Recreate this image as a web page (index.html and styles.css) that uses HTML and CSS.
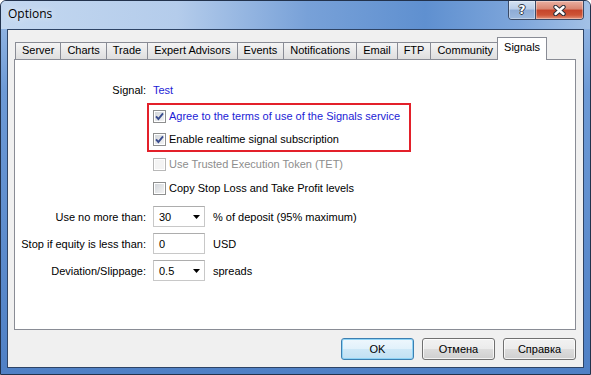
FILE: index.html
```html
<!DOCTYPE html>
<html lang="en">

<head>
    <meta charset="UTF-8">
    <title>Options</title>
    <link rel="stylesheet" href="styles.css">
</head>

<body>
    <div class="window">
        <div class="titlebar">
            <span class="title">Options</span>
            <div class="caption-buttons">
                <div class="cap-btn help">?</div>
                <div class="cap-btn close">
                    <svg width="13" height="11" viewBox="0 0 13 11">
                        <path d="M2.5 2 L10.5 9 M10.5 2 L2.5 9" stroke="#2a2f3a" stroke-width="4.4" stroke-linecap="round" fill="none" />
                        <path d="M2.5 2 L10.5 9 M10.5 2 L2.5 9" stroke="#fff" stroke-width="2.4" stroke-linecap="round" fill="none" />
                    </svg>
                </div>
            </div>
        </div>

        <div class="client">
            <div class="tabs">
                <div class="tab">Server</div>
                <div class="tab">Charts</div>
                <div class="tab">Trade</div>
                <div class="tab">Expert Advisors</div>
                <div class="tab">Events</div>
                <div class="tab">Notifications</div>
                <div class="tab">Email</div>
                <div class="tab">FTP</div>
                <div class="tab">Community</div>
                <div class="tab active">Signals</div>
            </div>

            <div class="panel">
                <div class="row signal-row">
                    <div class="label">Signal:</div>
                    <div class="link">Test</div>
                </div>

                <!-- the two options marked in red -->
                <div class="highlight">
                    <div class="check-row">
                        <span class="check"><svg width="11" height="11" viewBox="0 0 11 11"><path d="M2 5.3 L4.4 8 L9 2.4" stroke="#3a4d8f" stroke-width="1.9" fill="none" /></svg></span>
                        <span class="link">Agree to the terms of use of the Signals service</span>
                    </div>
                    <div class="check-row">
                        <span class="check"><svg width="11" height="11" viewBox="0 0 11 11"><path d="M2 5.3 L4.4 8 L9 2.4" stroke="#3a4d8f" stroke-width="1.9" fill="none" /></svg></span>
                        <span>Enable realtime signal subscription</span>
                    </div>
                </div>

                <div class="check-row indent disabled">
                    <span class="check"></span>
                    <span>Use Trusted Execution Token (TET)</span>
                </div>
                <div class="check-row indent">
                    <span class="check"></span>
                    <span>Copy Stop Loss and Take Profit levels</span>
                </div>

                <div class="row field">
                    <div class="label">Use no more than:</div>
                    <div class="combo">
                        <span>30</span>
                        <svg width="7" height="4" viewBox="0 0 7 4"><path d="M0 0 H7 L3.5 4 Z" fill="#000" /></svg>
                    </div>
                    <div class="suffix">% of deposit (95% maximum)</div>
                </div>
                <div class="row field">
                    <div class="label">Stop if equity is less than:</div>
                    <div class="combo">
                        <span>0</span>
                    </div>
                    <div class="suffix">USD</div>
                </div>
                <div class="row field">
                    <div class="label">Deviation/Slippage:</div>
                    <div class="combo">
                        <span>0.5</span>
                        <svg width="7" height="4" viewBox="0 0 7 4"><path d="M0 0 H7 L3.5 4 Z" fill="#000" /></svg>
                    </div>
                    <div class="suffix">spreads</div>
                </div>
            </div>

            <div class="buttons">
                <button class="btn default">OK</button>
                <button class="btn">Отмена</button>
                <button class="btn">Справка</button>
            </div>
        </div>
    </div>
</body>

</html>
```

FILE: styles.css
```css
* {
    box-sizing: border-box;
}

body {
    margin: 0;
    background: #fff;
    font-family: "Liberation Sans", Arial, sans-serif;
    font-size: 11px;
    color: #000;
}

/* window frame */
.window {
    width: 591px;
    height: 375px;
    border: 1px solid #22324c;
    border-radius: 6px 6px 0 0;
    padding: 0 6px 6px;
    display: flex;
    flex-direction: column;
    overflow: hidden;
    background: linear-gradient(to bottom, #9dbde6 0, #6d9ad6 90px, #4f80c5 100%);
}

.titlebar {
    height: 28px;
    margin: 0 -6px;
    padding: 0 6px;
    display: flex;
    justify-content: space-between;
    align-items: flex-start;
    background: linear-gradient(to right, #c4d8f0 0%, #b4cceb 30%, #78a1d8 52%, #5f90d0 72%, #7ea6db 88%, #a3c1e6 100%);
}

.title {
    font-family: "Open Sans", "Liberation Sans", sans-serif;
    font-size: 12px;
    line-height: 26px;
    padding-left: 1px;
    text-shadow: 0 0 6px rgba(255, 255, 255, 0.9);
}

.caption-buttons {
    display: flex;
    height: 19px;
    border: 1px solid #3a4a66;
    border-top: none;
    border-radius: 0 0 4px 4px;
    overflow: hidden;
}

.cap-btn {
    height: 100%;
    display: flex;
    justify-content: center;
    align-items: center;
    box-shadow: inset 0 0 0 1px rgba(255, 255, 255, 0.35);
}

.cap-btn.help {
    width: 27px;
    border-right: 1px solid #3a4a66;
    background: linear-gradient(#d5e2f2 0%, #b9cde8 45%, #8eacd6 50%, #9db9de 100%);
    color: #fff;
    font-family: "DejaVu Sans", sans-serif;
    font-weight: bold;
    font-size: 12px;
    text-shadow: 1px 0 #2f3848, -1px 0 #2f3848, 0 1px #2f3848, 0 -1px #2f3848;
}

.cap-btn.close {
    width: 47px;
    background: linear-gradient(#eab0a2 0%, #d98470 45%, #c6442a 50%, #cd5436 78%, #e4937a 100%);
}

/* client area */
.client {
    flex: 1;
    border: 1px solid #2e4466;
    background: #f0f0f0;
    padding: 7px 7px 7px 6px;
    display: flex;
    flex-direction: column;
}

.tabs {
    display: flex;
    align-items: flex-end;
    height: 22px;
    padding-left: 2px;
}

.tab {
    height: 17px;
    margin-left: -1px;
    padding: 0 6px;
    border: 1px solid #898c95;
    border-bottom: none;
    line-height: 15px;
    white-space: nowrap;
    background: linear-gradient(#f5f5f5, #e8e8e8 55%, #dedede);
}

.tab.active {
    position: relative;
    z-index: 1;
    height: 23px;
    margin: 0 -2px -1px -3px;
    line-height: 18px;
    background: #fff;
}

.panel {
    height: 271px;
    border: 1px solid #898c95;
    background: #fff;
    padding-top: 22px;
}

.row {
    display: flex;
    align-items: center;
}

.signal-row {
    height: 16px;
}

.label {
    width: 138px;
    padding-right: 7px;
    text-align: right;
}

.link {
    color: #1c1cd6;
}

.highlight {
    width: 264px;
    margin: 5px 0 0 132px;
    padding-left: 4px;
    border: 2px solid #e3202a;
    display: flex;
    flex-direction: column;
    gap: 1px;
}

.check-row {
    display: flex;
    align-items: center;
    gap: 3px;
    height: 24px;
    white-space: nowrap;
}

.highlight .check-row {
    height: 22px;
}

.check-row.indent {
    padding-left: 138px;
}

.check {
    flex: none;
    width: 13px;
    height: 13px;
    border: 1px solid #8e8f8f;
    background: linear-gradient(135deg, #cfd3d8, #f6f6f6);
    box-shadow: inset 0 0 0 1px #fff;
}

.check svg {
    display: block;
}

.check-row.disabled {
    color: #8d8d8d;
}

.check-row.disabled .check {
    border-color: #b8b8b8;
    background: #f4f4f4;
}

.field {
    height: 21px;
    margin-top: 6px;
}

.combo {
    width: 52px;
    height: 21px;
    padding: 0 4px 0 5px;
    border: 1px solid #c8c8c8;
    border-top-color: #adadad;
    display: flex;
    justify-content: space-between;
    align-items: center;
}

.suffix {
    margin-left: 8px;
}

/* dialog buttons */
.buttons {
    display: flex;
    justify-content: flex-end;
    gap: 8px;
    margin-top: 8px;
}

.btn {
    width: 73px;
    height: 22px;
    padding: 0;
    font: inherit;
    color: #000;
    border: 1px solid #707070;
    border-radius: 3px;
    background: linear-gradient(#f2f2f2 0%, #ebebeb 50%, #dddddd 50%, #cfcfcf 100%);
    box-shadow: inset 0 0 0 1px rgba(255, 255, 255, 0.75);
}

.btn.default {
    border-color: #3c7fb1;
    background: linear-gradient(#eef7fd 0%, #e1f1fb 50%, #cfe8f7 50%, #c1e0f3 100%);
    box-shadow: inset 0 0 0 1px #8fd3f5;
}
```
